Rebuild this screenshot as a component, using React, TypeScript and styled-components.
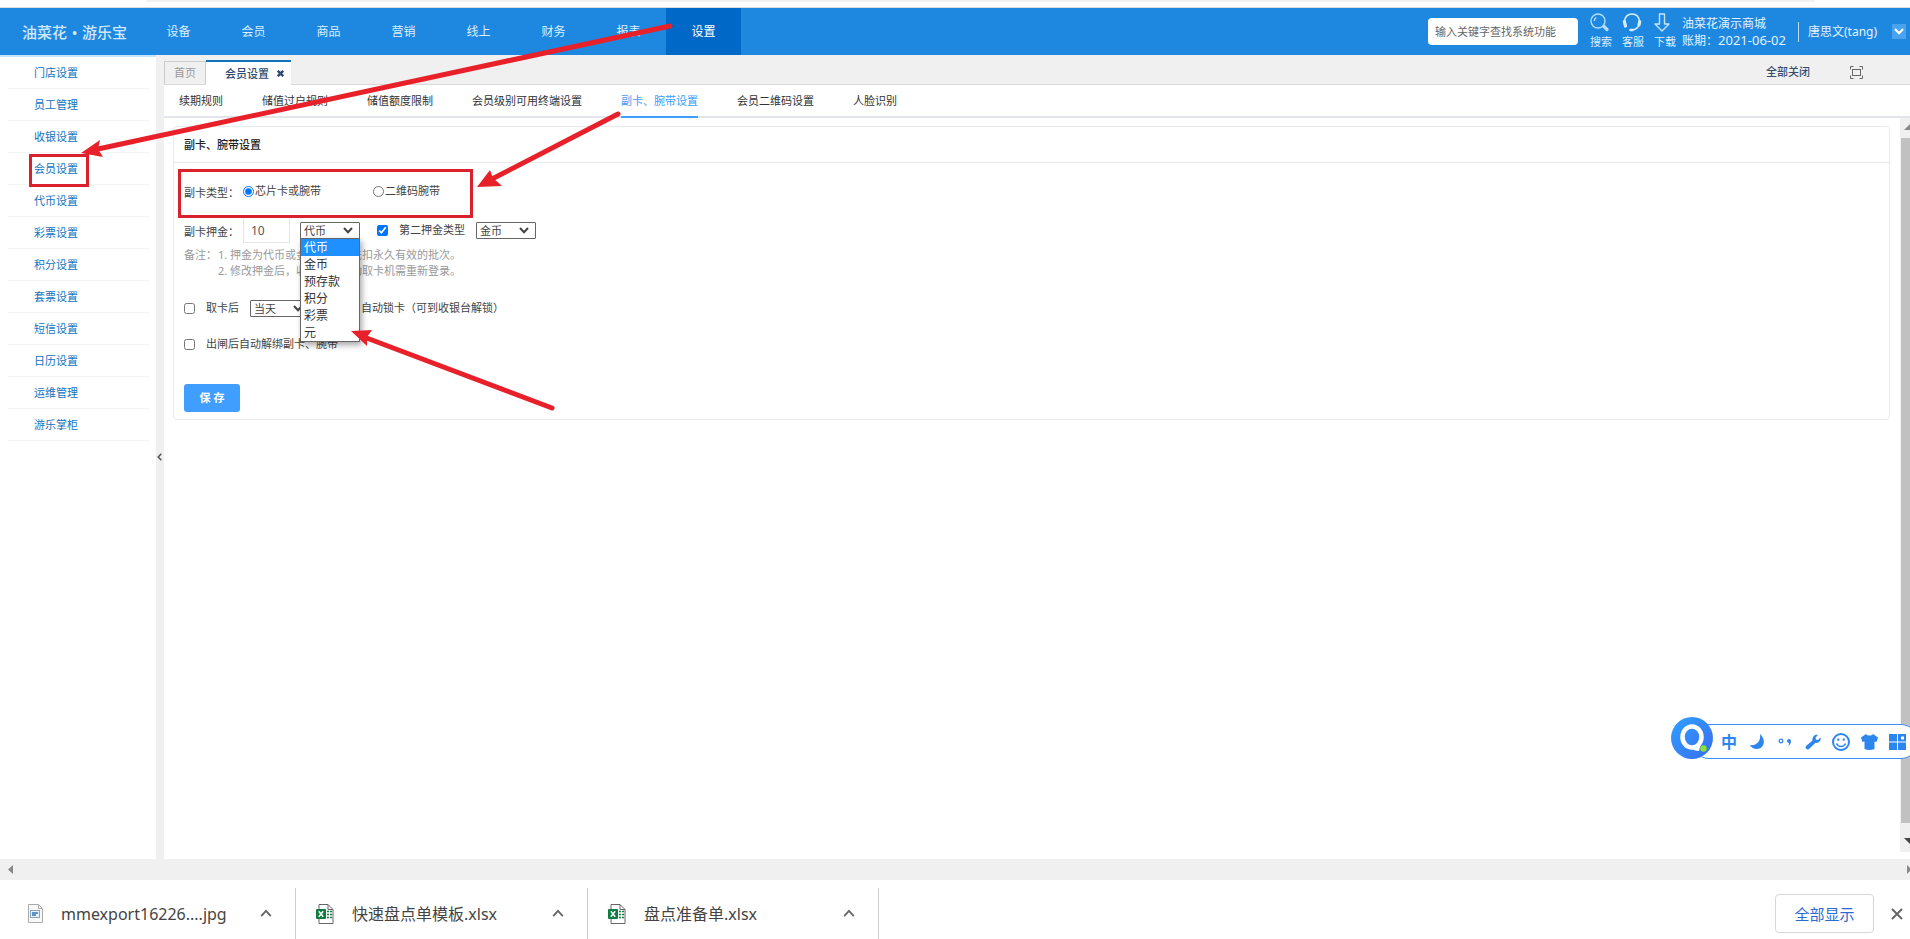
import React from "react";
import styled, { createGlobalStyle, css } from "styled-components";

const Global = createGlobalStyle`
  *, *::before, *::after { box-sizing: border-box; }
  html, body { margin: 0; padding: 0; overflow: hidden; }
  body, button, input, select {
    font-family: "Noto Sans", "Noto Sans CJK SC", sans-serif;
    font-size: 11px;
    line-height: 16px;
  }
  ul { list-style: none; margin: 0; padding: 0; }
  a { text-decoration: none; color: inherit; }
`;

const Page = styled.div`
  position: relative;
  display: flex;
  flex-direction: column;
  width: 100%;
  height: 100vh;
  overflow: hidden;
  background: #fff;
  color: #444;
`;

const BrowserEdge = styled.div`
  flex: none;
  height: 8px;
  padding: 0 95px 0 146px;
  border-bottom: 1px solid #dcdcdc;
  &::before {
    content: "";
    display: block;
    height: 2px;
    background: #f1f1f1;
    border-radius: 0 0 8px 8px;
  }
`;

/* ---------- header ---------- */

const Header = styled.header`
  flex: none;
  display: flex;
  align-items: stretch;
  height: 47px;
  background: #1e88e1;
  color: #e3f2ff;
`;

const Logo = styled.a`
  display: flex;
  align-items: center;
  justify-content: space-between;
  width: 141px;
  padding: 0 14px 0 22px;
  color: #cfe8ff;
  font-size: 15px;
  font-weight: 500;
  line-height: 20px;
`;

const MainNav = styled.nav`
  display: flex;
`;

const NavItem = styled.a<{ $active?: boolean }>`
  display: flex;
  align-items: center;
  justify-content: center;
  width: 75px;
  font-size: 12px;
  background: ${(p) => (p.$active ? "#0069c8" : "transparent")};
  color: ${(p) => (p.$active ? "#fff" : "#dceeff")};
`;

const HeaderTools = styled.div`
  display: flex;
  align-items: center;
  margin-left: auto;
  padding-right: 4px;
`;

const SearchBox = styled.input`
  width: 150px;
  height: 27px;
  margin-right: 12px;
  padding: 0 7px;
  border: 0;
  border-radius: 4px;
  background: #fff;
  color: #444;
  &::placeholder { color: #666; opacity: 1; }
`;

const ToolButton = styled.button`
  display: flex;
  flex-direction: column;
  align-items: flex-start;
  gap: 2px;
  width: 32px;
  padding: 0;
  border: 0;
  background: none;
  color: #dceeff;
  white-space: nowrap;
`;

const Account = styled.div`
  width: 116px;
  margin-left: -4px;
  font-size: 12px;
  line-height: 17px;
  white-space: nowrap;
`;

const AccountDate = styled.time`
  font-size: 13px;
`;

const HeaderRule = styled.span`
  width: 1px;
  height: 20px;
  margin-right: 9px;
  background: #b9dcfb;
`;

const UserName = styled.span`
  width: 84px;
  font-size: 12px;
  white-space: nowrap;
`;

const UserToggle = styled.button`
  display: flex;
  align-items: center;
  justify-content: center;
  width: 14px;
  height: 15px;
  padding: 0;
  border: 0;
  background: #4aa3ee;
  color: #fff;
`;

/* ---------- body ---------- */

const Body = styled.div`
  flex: 1;
  min-height: 0;
  display: flex;
`;

const Sidebar = styled.nav`
  flex: none;
  width: 156px;
  padding: 0 6px 0 8px;
  border-top: 2px solid #c4e4fb;
`;

const SideItem = styled.a`
  display: flex;
  align-items: center;
  height: 32px;
  padding-left: 26px;
  border-bottom: 1px solid #f4f4f4;
  color: #1173bf;
`;

const Splitter = styled.button`
  flex: none;
  display: flex;
  align-items: center;
  justify-content: center;
  width: 8px;
  padding: 0;
  border: 0;
  background: #f0f0f0;
  color: #555;
`;

const Content = styled.main`
  flex: 1;
  min-width: 0;
  display: flex;
  flex-direction: column;
`;

const TabBar = styled.div`
  flex: none;
  display: flex;
  align-items: flex-end;
  height: 30px;
  background: #f0f0f0;
  border-bottom: 1px solid #d9d9d9;
`;

const PageTab = styled.a<{ $active?: boolean }>`
  display: flex;
  align-items: center;
  justify-content: center;
  gap: 8px;
  height: 23px;
  width: 42px;
  border: 1px solid #ccc;
  border-bottom: 0;
  color: #999;
  ${(p) =>
    p.$active &&
    css`
      height: 25px;
      width: 85px;
      margin-bottom: -1px;
      padding-left: 12px;
      border: 0;
      border-top: 2px solid #1272bd;
      background: #fff;
      color: #2d4a70;
      font-weight: 500;
    `}
`;

const BarActions = styled.div`
  display: flex;
  align-items: center;
  gap: 40px;
  height: 24px;
  margin-left: auto;
  padding-right: 47px;
`;

const PlainButton = styled.button`
  display: flex;
  align-items: center;
  padding: 0;
  border: 0;
  background: none;
  color: #3b4d6b;
  font-weight: 500;
`;

const SubTabs = styled.nav`
  flex: none;
  display: flex;
  gap: 39px;
  height: 33px;
  padding-left: 15px;
  border-bottom: 2px solid #e2e5ea;
`;

const SubTab = styled.a<{ $active?: boolean }>`
  height: 33px;
  line-height: 32px;
  white-space: nowrap;
  border-bottom: 2px solid ${(p) => (p.$active ? "#409eff" : "transparent")};
  color: ${(p) => (p.$active ? "#409eff" : "#333")};
`;

const Workspace = styled.div`
  flex: 1;
  min-height: 0;
  display: flex;
`;

const Scrolled = styled.div`
  flex: 1;
  min-width: 0;
  padding: 8px 10px 0 9px;
`;

const Card = styled.section`
  padding-bottom: 7px;
  border: 1px solid #e8eaee;
  border-radius: 4px;
`;

const CardTitle = styled.h2`
  margin: 0;
  height: 36px;
  padding-left: 10px;
  border-bottom: 1px solid #e8eaee;
  color: #222;
  font-size: 11px;
  font-weight: 500;
  line-height: 36px;
`;

const Form = styled.form`
  padding: 16px 10px 0;
`;

const Row = styled.div<{ $height: number; $gap?: number }>`
  display: flex;
  align-items: center;
  height: ${(p) => p.$height}px;
  margin-top: ${(p) => p.$gap ?? 0}px;
  white-space: nowrap;
`;

const RowLabel = styled.span`
  width: 59px;
  padding-top: 4px;
`;

const Choice = styled.label<{ $width: number; $gap?: number }>`
  display: flex;
  align-items: center;
  width: ${(p) => p.$width}px;
  margin-left: ${(p) => p.$gap ?? 0}px;
`;

const Radio = styled.input`
  width: 11px;
  height: 11px;
  margin: 0 1px 0 0;
  accent-color: #0075ff;
`;

const Check = styled.input`
  width: 11px;
  height: 11px;
  margin: 0 11px 0 0;
  accent-color: #0075ff;
`;

const Amount = styled.input`
  width: 47px;
  height: 26px;
  margin-right: 10px;
  padding: 0 7px;
  border: 1px solid #e2e5ea;
  color: #555;
  font-size: 12px;
`;

const SelectWrap = styled.span`
  position: relative;
  display: block;
  width: 60px;
  height: 17px;
  svg {
    position: absolute;
    right: 7px;
    top: 5px;
    pointer-events: none;
  }
`;

const Select = styled.select`
  display: block;
  appearance: none;
  width: 60px;
  height: 17px;
  padding: 0 3px;
  border: 1px solid #666;
  border-radius: 1px;
  background: #fff;
  color: #444;
  line-height: 15px;
`;

const Menu = styled.ul`
  position: absolute;
  z-index: 2;
  top: 16px;
  left: 0;
  width: 60px;
  border: 1px solid #666;
  background: #fff;
  box-shadow: 2px 3px 6px rgba(0, 0, 0, 0.35);
  color: #333;
  font-size: 12px;
  line-height: 17px;
`;

const MenuItem = styled.li<{ $active?: boolean }>`
  height: 17px;
  padding-left: 3px;
  background: ${(p) => (p.$active ? "#1e90ff" : "#fff")};
  color: ${(p) => (p.$active ? "#fff" : "#333")};
`;

const Notes = styled.div`
  display: flex;
  padding-top: 4px;
  color: #999;
  ol { margin: 0; padding: 0; list-style: none; }
  > span { width: 34px; }
`;

const LockText = styled.span`
  margin-left: 51px;
`;

const SaveButton = styled.button`
  display: block;
  width: 56px;
  height: 28px;
  margin-top: 22px;
  padding: 0;
  border: 0;
  border-radius: 3px;
  background: #409eff;
  color: #fff;
  font-weight: 700;
`;

const VScroll = styled.div`
  flex: none;
  display: flex;
  flex-direction: column;
  align-items: flex-end;
  width: 10px;
  margin-bottom: 7px;
  background: #f0f0f0;
  overflow: hidden;
`;

const VThumb = styled.div`
  flex: 1;
  width: 9px;
  background: #c1c1c1;
`;

const HScroll = styled.div`
  flex: none;
  display: flex;
  align-items: center;
  justify-content: space-between;
  height: 21px;
  padding-left: 8px;
  background: #f0f0f0;
`;

/* ---------- download shelf ---------- */

const Shelf = styled.footer`
  flex: none;
  display: flex;
  align-items: flex-end;
  height: 59px;
`;

const Download = styled.div<{ $width: number; $inset?: number }>`
  display: flex;
  align-items: center;
  width: ${(p) => p.$width}px;
  height: 51px;
  padding: 0 23px 0 ${(p) => p.$inset ?? 20}px;
  border-right: 1px solid #ccc;
  color: #444;
`;

const FileName = styled.span`
  flex: 1;
  margin-left: 18px;
  font-size: 16px;
  line-height: 24px;
  white-space: nowrap;
`;

const IconButton = styled.button`
  display: flex;
  padding: 0;
  border: 0;
  background: none;
  color: #666;
`;

const ShelfEnd = styled.div`
  display: flex;
  align-items: center;
  gap: 17px;
  height: 51px;
  margin-left: auto;
  padding-right: 7px;
`;

const ShowAll = styled.button`
  width: 99px;
  height: 39px;
  padding: 0;
  border: 1px solid #d4d7db;
  border-radius: 4px;
  background: #fff;
  color: #2d6bd2;
  font-size: 15px;
`;

/* ---------- floating layers ---------- */

const Ime = styled.aside`
  position: absolute;
  z-index: 3;
  right: -8px;
  bottom: 180px;
  display: flex;
  align-items: center;
  width: 226px;
  height: 35px;
  padding-left: 22px;
  border: 1px solid #3a8ef2;
  border-radius: 17px;
  background: #fff;
`;

const ImeLogo = styled.svg`
  position: absolute;
  left: -22px;
  bottom: -1px;
`;

const ImeKey = styled.button`
  display: flex;
  align-items: center;
  justify-content: center;
  width: 28px;
  height: 28px;
  padding: 0;
  border: 0;
  background: none;
  color: #2d86ee;
  font-size: 16px;
  font-weight: 700;
`;

const Marks = styled.svg`
  position: absolute;
  z-index: 4;
  left: 0;
  top: 0;
  pointer-events: none;
`;

const navItems = ["设备", "会员", "商品", "营销", "线上", "财务", "报表", "设置"];
const sideItems = [
  "门店设置", "员工管理", "收银设置", "会员设置", "代币设置", "彩票设置",
  "积分设置", "套票设置", "短信设置", "日历设置", "运维管理", "游乐掌柜",
];
const subTabs = [
  "续期规则", "储值过户规则", "储值额度限制", "会员级别可用终端设置",
  "副卡、腕带设置", "会员二维码设置", "人脸识别",
];
const currencies = ["代币", "金币", "预存款", "积分", "彩票", "元"];

const Chevron = ({ up, w = 10, sw = 2 }: { up?: boolean; w?: number; sw?: number }) => (
  <svg width={w} height={w * 0.7} viewBox="0 0 10 7" fill="none" stroke="currentColor" strokeWidth={sw}>
    <path d={up ? "M1 6 5 1.5 9 6" : "M1 1 5 5.3 9 1"} />
  </svg>
);

type PickerProps = { label: string; options: string[]; value: string; children?: React.ReactNode };

const Picker = ({ label, options, value, children }: PickerProps) => (
  <SelectWrap>
    <Select aria-label={label} defaultValue={value}>
      {options.map((c) => (
        <option key={c}>{c}</option>
      ))}
    </Select>
    <Chevron />
    {children}
  </SelectWrap>
);

const XlsIcon = () => (
  <svg width="18" height="20" viewBox="0 0 18 20">
    <path d="M3 .5h9l5 5v14H3z" fill="#fff" stroke="#666" />
    <path d="M12 .5v5h5" fill="none" stroke="#666" />
    <path d="M11 7.5h2M14 7.5h2M11 10.5h2M14 10.5h2M11 13.5h2M14 13.5h2" stroke="#107c41" strokeWidth="1.6" />
    <rect y="5" width="10" height="10" rx="1" fill="#107c41" />
    <path d="M2.8 7.3l4.4 5.4M7.2 7.3l-4.4 5.4" stroke="#fff" strokeWidth="1.5" />
  </svg>
);

const JpgIcon = () => (
  <svg width="15" height="19" viewBox="0 0 15 19">
    <path d="M.5.5h10l4 4v14H.5z" fill="#f8f8f8" stroke="#aaa" />
    <path d="M10.5.5v4h4" fill="none" stroke="#aaa" />
    <rect x="2.5" y="6.5" width="9" height="7" fill="#e8f1f9" stroke="#8aa6bd" />
    <path d="M4 9h6M4 11h4" stroke="#3177b8" strokeWidth="1.5" />
  </svg>
);

export default function App() {
  return (
    <Page>
      <Global />
      <BrowserEdge />
      <Header>
        <Logo href="#">
          <span>油菜花</span>
          <span>•</span>
          <span>游乐宝</span>
        </Logo>
        <MainNav>
          {navItems.map((n) => (
            <NavItem key={n} href="#" $active={n === "设置"}>{n}</NavItem>
          ))}
        </MainNav>
        <HeaderTools>
          <SearchBox aria-label="搜索系统功能" placeholder="输入关键字查找系统功能" />
          <ToolButton>
            <svg width="20" height="19" viewBox="0 0 20 19" fill="none" stroke="#b5dcff" strokeWidth="1.4">
              <circle cx="8" cy="8" r="7" />
              <path d="M4.3 8A3.7 3.7 0 0 1 6.300 4.700" />
              <path d="M14 13.500l3 3" strokeWidth="3.200" strokeLinecap="round" />
            </svg>
            <span>搜索</span>
          </ToolButton>
          <ToolButton>
            <svg width="20" height="19" viewBox="0 0 20 19" fill="none" stroke="#d6ecff" strokeLinecap="round">
              <path d="M2.500 8.500C3 3.500 6 1 10 1s7 2.500 7.500 7.500" strokeWidth="1.600" />
              <path d="M2.300 8.500 3.500 13M17.700 8.500 17 12" strokeWidth="3.200" />
              <path d="M17 12c-1 3-3 4.500-7 5" strokeWidth="1.600" />
              <path d="M8.500 17h2" strokeWidth="2.600" />
            </svg>
            <span>客服</span>
          </ToolButton>
          <ToolButton>
            <svg width="16" height="19" viewBox="0 0 16 19" fill="none" stroke="#c6e4ff" strokeWidth="1.400" strokeLinejoin="round">
              <path d="M5.500 1h5v10H15l-7 7-7-7h4.500z" />
            </svg>
            <span>下载</span>
          </ToolButton>
          <Account>
            <div>油菜花演示商城</div>
            <div>账期：<AccountDate>2021-06-02</AccountDate></div>
          </Account>
          <HeaderRule />
          <UserName>唐思文(tang)</UserName>
          <UserToggle aria-label="用户菜单"><Chevron /></UserToggle>
        </HeaderTools>
      </Header>

      <Body>
        <Sidebar>
          {sideItems.map((s) => (
            <SideItem key={s} href="#">{s}</SideItem>
          ))}
        </Sidebar>
        <Splitter aria-label="收起侧栏">
          <svg width="6" height="8" viewBox="0 0 6 8" fill="none" stroke="currentColor" strokeWidth="1.500">
            <path d="M4.300 .8 1.200 4l3.100 3.200" />
          </svg>
        </Splitter>
        <Content>
          <TabBar>
            <PageTab href="#">首页</PageTab>
            <PageTab href="#" $active>
              会员设置
              <svg width="7" height="7" viewBox="0 0 7 7" stroke="currentColor" strokeWidth="2.400">
                <path d="M.8.8l5.400 5.400M6.200.8L.8 6.200" />
              </svg>
            </PageTab>
            <BarActions>
              <PlainButton>全部关闭</PlainButton>
              <PlainButton aria-label="全屏">
                <svg width="13" height="13" viewBox="0 0 13 13" fill="none" stroke="#666">
                  <path d="M.5 3.500v-3h3M9.500.5h3v3M12.500 9.500v3h-3M3.500 12.500h-3v-3" />
                  <rect x="2.500" y="3.500" width="8" height="6" />
                </svg>
              </PlainButton>
            </BarActions>
          </TabBar>
          <SubTabs>
            {subTabs.map((t) => (
              <SubTab key={t} href="#" $active={t === "副卡、腕带设置"}>{t}</SubTab>
            ))}
          </SubTabs>
          <Workspace>
            <Scrolled>
              <Card>
                <CardTitle>副卡、腕带设置</CardTitle>
                <Form onSubmit={(e) => e.preventDefault()}>
                  <Row $height={24}>
                    <RowLabel>副卡类型：</RowLabel>
                    <Choice $width={130}>
                      <Radio type="radio" name="kind" defaultChecked />芯片卡或腕带
                    </Choice>
                    <Choice $width={80}>
                      <Radio type="radio" name="kind" />二维码腕带
                    </Choice>
                  </Row>
                  <Row $height={26} $gap={14}>
                    <RowLabel>副卡押金：</RowLabel>
                    <Amount aria-label="副卡押金" defaultValue="10" />
                    <Picker label="押金类型" options={currencies} value="代币">
                      <Menu role="listbox">
                        {currencies.map((c, i) => (
                          <MenuItem key={c} role="option" aria-selected={i === 0} $active={i === 0}>{c}</MenuItem>
                        ))}
                      </Menu>
                    </Picker>
                    <Choice $width={99} $gap={17}>
                      <Check type="checkbox" defaultChecked />第二押金类型
                    </Choice>
                    <Picker label="第二押金类型" options={currencies} value="金币" />
                  </Row>
                  <Notes>
                    <span>备注：</span>
                    <ol>
                      <li>1. 押金为代币或金币时，优先扣永久有效的批次。</li>
                      <li>2. 修改押金后，收银台、自动取卡机需重新登录。</li>
                    </ol>
                  </Notes>
                  <Row $height={36} $gap={11}>
                    <Choice $width={66}>
                      <Check type="checkbox" />取卡后
                    </Choice>
                    <Picker label="锁卡时间" options={["当天"]} value="当天" />
                    <LockText>自动锁卡（可到收银台解锁）</LockText>
                  </Row>
                  <Row $height={36}>
                    <Choice $width={180}>
                      <Check type="checkbox" />出闸后自动解绑副卡、腕带
                    </Choice>
                  </Row>
                  <SaveButton>保 存</SaveButton>
                </Form>
              </Card>
            </Scrolled>
            <VScroll>
              <svg width="6" height="20" viewBox="0 0 6 20"><path d="M0 12 6 6v6z" fill="#888" /></svg>
              <VThumb />
              <svg width="6" height="29" viewBox="0 0 6 29"><path d="M0 15h6v6z" fill="#444" /></svg>
            </VScroll>
          </Workspace>
        </Content>
      </Body>
      <HScroll>
        <svg width="5" height="9" viewBox="0 0 5 9"><path d="M5 0v9L0 4.500z" fill="#888" /></svg>
        <svg width="3" height="9" viewBox="0 0 3 9"><path d="M0 0v9l3-3V3z" fill="#888" /></svg>
      </HScroll>

      <Shelf>
        <Download $width={296} $inset={28}>
          <JpgIcon />
          <FileName>mmexport16226....jpg</FileName>
          <IconButton aria-label="文件选项"><Chevron up w={12} sw={1.5} /></IconButton>
        </Download>
        <Download $width={292}>
          <XlsIcon />
          <FileName>快速盘点单模板.xlsx</FileName>
          <IconButton aria-label="文件选项"><Chevron up w={12} sw={1.5} /></IconButton>
        </Download>
        <Download $width={291}>
          <XlsIcon />
          <FileName>盘点准备单.xlsx</FileName>
          <IconButton aria-label="文件选项"><Chevron up w={12} sw={1.5} /></IconButton>
        </Download>
        <ShelfEnd>
          <ShowAll>全部显示</ShowAll>
          <IconButton aria-label="关闭下载栏">
            <svg width="12" height="12" viewBox="0 0 12 12" stroke="currentColor" strokeWidth="2">
              <path d="M1 1l10 10M11 1L1 11" />
            </svg>
          </IconButton>
        </ShelfEnd>
      </Shelf>

      <Ime>
        <ImeLogo width="42" height="42" viewBox="0 0 42 42">
          <defs>
            <linearGradient id="imeFill" x1="0" y1="0" x2="1" y2="1">
              <stop offset="0" stopColor="#2fa0ff" />
              <stop offset="1" stopColor="#3a6cf0" />
            </linearGradient>
          </defs>
          <circle cx="21" cy="21" r="21" fill="url(#imeFill)" />
          <ellipse cx="21" cy="20" rx="9.500" ry="10.500" fill="none" stroke="#fff" strokeWidth="4.500" />
          <path d="M19 30c3 3 6 4 9 4l2-8z" fill="#fff" />
          <circle cx="32.500" cy="31.500" r="3.200" fill="#8be52c" />
        </ImeLogo>
        <ImeKey>中</ImeKey>
        <ImeKey aria-label="月亮">
          <svg width="15" height="15" viewBox="0 0 15 15" fill="currentColor">
            <path d="M10 0c6 5 5 14-3 15-3 0-6-1.500-7-4C7 12 11 7 10 0z" />
          </svg>
        </ImeKey>
        <ImeKey aria-label="标点">
          <svg width="14" height="10" viewBox="0 0 14 10">
            <circle cx="3" cy="4" r="1.800" fill="none" stroke="currentColor" strokeWidth="1.300" />
            <path d="M9 4a2 2 0 1 1 4 0c0 2-1 4-3 5 .8-1.200 1-2 1-3-1 0-2-.8-2-2z" fill="currentColor" />
          </svg>
        </ImeKey>
        <ImeKey aria-label="工具">
          <svg width="16" height="16" viewBox="0 0 16 16" fill="currentColor">
            <path d="M13 1 10.500 3.500l.5 2 2 .5L15.500 3.500c1 3-1.500 6-5 5.300L4 15c-2 1.500-4.500-1-3-3l6.500-5.500C6.800 3 10 0 13 1z" />
          </svg>
        </ImeKey>
        <ImeKey aria-label="表情">
          <svg width="18" height="18" viewBox="0 0 18 18" fill="none" stroke="currentColor" strokeWidth="2">
            <circle cx="9" cy="9" r="8" />
            <path d="M4.500 10.500c1.500 4 7.500 4 9 0" strokeWidth="1.500" />
            <path d="M6.300 5.500v2.200M11.700 5.500v2.200" />
          </svg>
        </ImeKey>
        <ImeKey aria-label="皮肤">
          <svg width="17" height="16" viewBox="0 0 17 16" fill="currentColor">
            <path d="M5 0c1.500 2 5.500 2 7 0l5 3.500-1.500 4.500-2-.5V15c-3 1.300-7 1.300-10 0V7.500l-2 .5L0 3.500z" />
          </svg>
        </ImeKey>
        <ImeKey aria-label="更多">
          <svg width="17" height="16" viewBox="0 0 17 16" fill="currentColor">
            <path fillRule="evenodd" d="M0 0h8v7.500H0zM9 0h8v7.500H9zM0 8.500h8V16H0zM9 8.500h8V16H9zM12 2.500h3v3h-3z" />
          </svg>
        </ImeKey>
      </Ime>

      <Marks width="700" height="430" viewBox="0 0 700 430" fill="none" aria-hidden="true">
        <g stroke="#d9222e" strokeWidth="3">
          <rect x="30.500" y="155.500" width="57" height="30" />
          <rect x="179.500" y="170.500" width="292" height="46" />
        </g>
        <g stroke="#e8202a" strokeWidth="5" strokeLinecap="round">
          <path d="M670 26 98 149" />
          <path d="M618 114 491 179.500" />
          <path d="M552 408 364 337" />
        </g>
        <g fill="#e8202a">
          <path d="M81 153 100 140 98 149 103 157z" />
          <path d="M477 187 490 170 493 178 502 186z" />
          <path d="M351 331 372 330 367 337 367 346z" />
        </g>
      </Marks>
    </Page>
  );
}
